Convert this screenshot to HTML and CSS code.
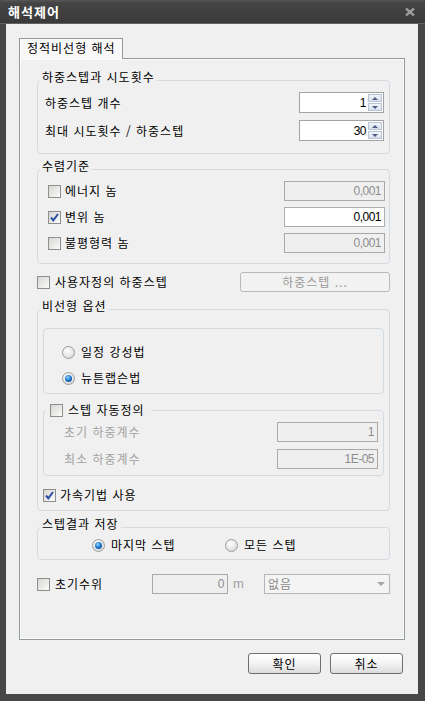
FILE: index.html
```html
<!DOCTYPE html>
<html lang="ko">
<head>
<meta charset="utf-8">
<title>해석제어</title>
<link rel="stylesheet" href="styles.css">
</head>
<body>
<div class="window">
  <div class="titlebar">
    <span class="title">해석제어</span>
    <svg class="close" width="10" height="8" viewBox="0 0 10 8"><path d="M1 0.5 L9 7.5 M9 0.5 L1 7.5" stroke="#9c9c9c" stroke-width="2.4" fill="none"/></svg>
  </div>
  <div class="frame">
    <div class="client">
      <div class="tabs"><div class="tab">정적비선형 해석</div></div>
      <div class="panel">

        <fieldset class="group g1">
          <legend>하중스텝과 시도횟수</legend>
          <div class="g1-body">
            <div class="row h21">
              <span>하중스텝 개수</span>
              <div class="spin"><span class="val">1</span><div class="spin-btns"><span class="sb"><i class="tri up"></i></span><span class="sb"><i class="tri down"></i></span></div></div>
            </div>
            <div class="row h21">
              <span>최대 시도횟수 / 하중스텝</span>
              <div class="spin"><span class="val">30</span><div class="spin-btns"><span class="sb"><i class="tri up"></i></span><span class="sb"><i class="tri down"></i></span></div></div>
            </div>
          </div>
        </fieldset>

        <fieldset class="group g2">
          <legend>수렴기준</legend>
          <div class="g2-body">
            <div class="row h20">
              <label class="chk"><span class="box"></span>에너지 놈</label>
              <div class="field disabled w101">0,001</div>
            </div>
            <div class="row h20">
              <label class="chk"><span class="box checked"><svg width="11" height="11" viewBox="0 0 11 11"><path d="M2 5.5 L4.3 8.3 L9 2" stroke="#2b4fa3" stroke-width="2" fill="none"/></svg></span>변위 놈</label>
              <div class="field w101">0,001</div>
            </div>
            <div class="row h20">
              <label class="chk"><span class="box"></span>불평형력 놈</label>
              <div class="field disabled w101">0,001</div>
            </div>
          </div>
        </fieldset>

        <div class="row h20 custom">
          <label class="chk gap5"><span class="box"></span>사용자정의 하중스텝</label>
          <div class="btn disabled-btn">하중스텝 ...</div>
        </div>

        <fieldset class="group g3">
          <legend>비선형 옵션</legend>
          <div class="g3-body">
            <div class="radiobox">
              <label class="rad"><span class="radio"></span>일정 강성법</label>
              <label class="rad"><span class="radio on"></span>뉴튼랩슨법</label>
            </div>
            <fieldset class="group autostep">
              <legend><label class="chk gap5"><span class="box"></span>스텝 자동정의</label></legend>
              <div class="auto-body">
                <div class="row h20">
                  <span class="muted">초기 하중계수</span>
                  <div class="field disabled w101">1</div>
                </div>
                <div class="row h20">
                  <span class="muted">최소 하중계수</span>
                  <div class="field disabled w101">1E-05</div>
                </div>
              </div>
            </fieldset>
            <label class="chk accel"><span class="box checked"><svg width="11" height="11" viewBox="0 0 11 11"><path d="M2 5.5 L4.3 8.3 L9 2" stroke="#2b4fa3" stroke-width="2" fill="none"/></svg></span>가속기법 사용</label>
          </div>
        </fieldset>

        <fieldset class="group g4">
          <legend>스텝결과 저장</legend>
          <div class="g4-body">
            <label class="rad first"><span class="radio on"></span>마지막 스텝</label>
            <label class="rad"><span class="radio"></span>모든 스텝</label>
          </div>
        </fieldset>

        <div class="row h20 water">
          <label class="chk gap5 wlabel"><span class="box"></span>초기수위</label>
          <div class="field disabled w76">0</div>
          <span class="unit">m</span>
          <div class="combo"><span>없음</span><i class="tri down gray"></i></div>
        </div>

      </div>
      <div class="buttons">
        <div class="btn push">확인</div>
        <div class="btn push">취소</div>
      </div>
    </div>
  </div>
</div>
</body>
</html>
```

FILE: styles.css
```css
* { box-sizing: border-box; }
html, body { margin: 0; padding: 0; }
body {
  font-family: "Noto Sans CJK KR", "Noto Sans", sans-serif;
  font-size: 12px;
  line-height: 14px;
  letter-spacing: 1px;
  color: #000;
  background: #fff;
}
.window {
  width: 425px;
  height: 701px;
  display: flex;
  flex-direction: column;
  background: #474747;
}
.titlebar {
  height: 24px;
  flex: none;
  display: flex;
  align-items: center;
  justify-content: space-between;
  padding: 0 10px 0 8px;
  background: linear-gradient(#565656 0, #444 3px, #3a3a3a 100%);
  border-bottom: 1px solid #626262;
  border-radius: 4px 4px 0 0;
}
.title {
  color: #fff;
  font-weight: bold;
  font-size: 13px;
  letter-spacing: 1px;
  line-height: 24px;
}
.close { display: block; }
.frame {
  flex: 1;
  display: flex;
  padding: 0 7px 7px 6px;
  background: #474747;
}
.client {
  flex: 1;
  background: #f0f0f0;
  padding: 14px 13px 0 13px;
  display: flex;
  flex-direction: column;
}
.tabs { display: flex; height: 20px; position: relative; z-index: 1; }
.tab {
  width: 104px;
  height: 21px;
  border: 1px solid #919b9c;
  border-bottom: none;
  background: #f8f8f8;
  padding-left: 7px;
  line-height: 18px;
}
.panel {
  width: 386px;
  height: 582px;
  border: 1px solid #919b9c;
  box-shadow: inset 1px 1px 0 #fbfbfb, inset -1px -1px 0 #fbfbfb;
  background: #f0f0f0;
  padding: 11px 14px 0 17px;
  display: flex;
  flex-direction: column;
}
.group {
  margin: 0;
  padding: 0;
  min-width: 0;
  border: 1px solid #d3dbe2;
  border-radius: 4px;
}
.group > legend {
  padding: 0 2px 6px;
  margin-left: 2px;
  line-height: 14px;
}
.row { display: flex; align-items: center; justify-content: space-between; }
.h21 { height: 21px; }
.h20 { height: 20px; }
.g1-body { padding: 2px 5px 12px 7px; display: flex; flex-direction: column; gap: 7px; }
.g2 { margin-top: 5px; }
.g2-body { padding: 2px 4px 10px 10px; display: flex; flex-direction: column; gap: 6px; }

.spin {
  width: 85px;
  height: 21px;
  border: 1px solid #a3a3a3;
  background: #fff;
  display: flex;
  align-items: center;
}
.spin .val { flex: 1; text-align: right; padding-right: 2px; font-family: "Liberation Sans", sans-serif; letter-spacing: -0.5px; }
.spin-btns { width: 14px; height: 17px; margin-right: 1px; display: flex; flex-direction: column; gap: 1px; }
.sb {
  flex: 1;
  background: linear-gradient(#f2f5fa, #d6dfec);
  border: 1px solid #b8c4d6;
  display: flex;
  align-items: center;
  justify-content: center;
}
.tri { display: block; width: 0; height: 0; border-left: 3px solid transparent; border-right: 3px solid transparent; }
.tri.up { border-bottom: 3px solid #4d5f86; }
.tri.down { border-top: 3px solid #4d5f86; }
.tri.gray { border-left-width: 4px; border-right-width: 4px; border-top: 4px solid #a6a6a6; }

.chk { display: flex; align-items: center; gap: 4px; }
.chk.gap5 { gap: 5px; }
.box {
  width: 13px;
  height: 13px;
  border: 1px solid #8d8f8f;
  background: linear-gradient(135deg, #d6d6d2 0%, #ecece9 60%, #fbfbfb 100%);
  display: flex;
  align-items: center;
  justify-content: center;
  flex: none;
}
.box svg { display: block; }
.field {
  height: 20px;
  border: 1px solid #a7aeb6;
  background: #fff;
  text-align: right;
  padding-right: 3px;
  line-height: 18px;
  font-family: "Liberation Sans", sans-serif;
  letter-spacing: -0.5px;
}
.field.disabled { background: #efefef; color: #8d8d8d; border-color: #a9a9a9; }
.w101 { width: 101px; }
.w76 { width: 76px; }

.custom { margin-top: 8px; }
.btn {
  display: flex;
  align-items: center;
  justify-content: center;
  border-radius: 3px;
}
.disabled-btn {
  width: 150px;
  height: 20px;
  border: 1px solid #b9b9b9;
  color: #9a9a9a;
  background: #f2f2f2;
}

.g3 { margin-top: 7px; }
.g3-body { padding: 0 5px 7px 5px; display: flex; flex-direction: column; }
.radiobox {
  margin-top: 9px;
  border: 1px solid #d3dbe2;
  border-radius: 4px;
  padding: 15px 0 7px 18px;
  display: flex;
  flex-direction: column;
  gap: 10px;
}
.rad { display: flex; align-items: center; gap: 6px; height: 16px; }
.radio {
  width: 13px;
  height: 13px;
  border-radius: 50%;
  border: 1px solid #9d9d9d;
  background: radial-gradient(circle at 40% 35%, #ffffff 0%, #e6e6e6 55%, #cfcfcf 100%);
  display: flex;
  align-items: center;
  justify-content: center;
  flex: none;
}
.radio.on::after {
  content: "";
  width: 7px;
  height: 7px;
  border-radius: 50%;
  background: radial-gradient(circle at 40% 35%, #8fd6ff 0%, #1a73c6 50%, #0a3f7c 100%);
}
.autostep { margin-top: 8px; }
.autostep > legend { padding: 0 6px 0 4px; margin-left: 2px; line-height: 16px; }
.auto-body { padding: 4px 5px 6px 20px; display: flex; flex-direction: column; gap: 7px; }
.muted { color: #a2a2a2; }
.accel { margin-top: 11px; height: 16px; }

.g4 { margin-top: 6px; }
.g4-body { padding: 0 0 6px 54px; display: flex; height: 22px; }
.g4-body .first { width: 133px; }

.water { margin-top: 14px; justify-content: flex-start; }
.wlabel { width: 115px; }
.unit { color: #a0a0a0; margin-left: 5px; font-family: "Liberation Sans", sans-serif; font-size: 13px; }
.combo {
  margin-left: auto;
  width: 126px;
  height: 20px;
  border: 1px solid #b5b5b5;
  background: #f4f4f4;
  color: #8a8a8a;
  display: flex;
  align-items: center;
  justify-content: space-between;
  padding: 0 4px 0 3px;
}

.buttons {
  margin-top: 13px;
  padding-right: 2px;
  display: flex;
  justify-content: flex-end;
  gap: 9px;
}
.push {
  width: 73px;
  height: 21px;
  border: 1px solid #6f6f6f;
  background: linear-gradient(#ffffff 0%, #f3f3f3 50%, #dcdcdc 100%);
}
```
